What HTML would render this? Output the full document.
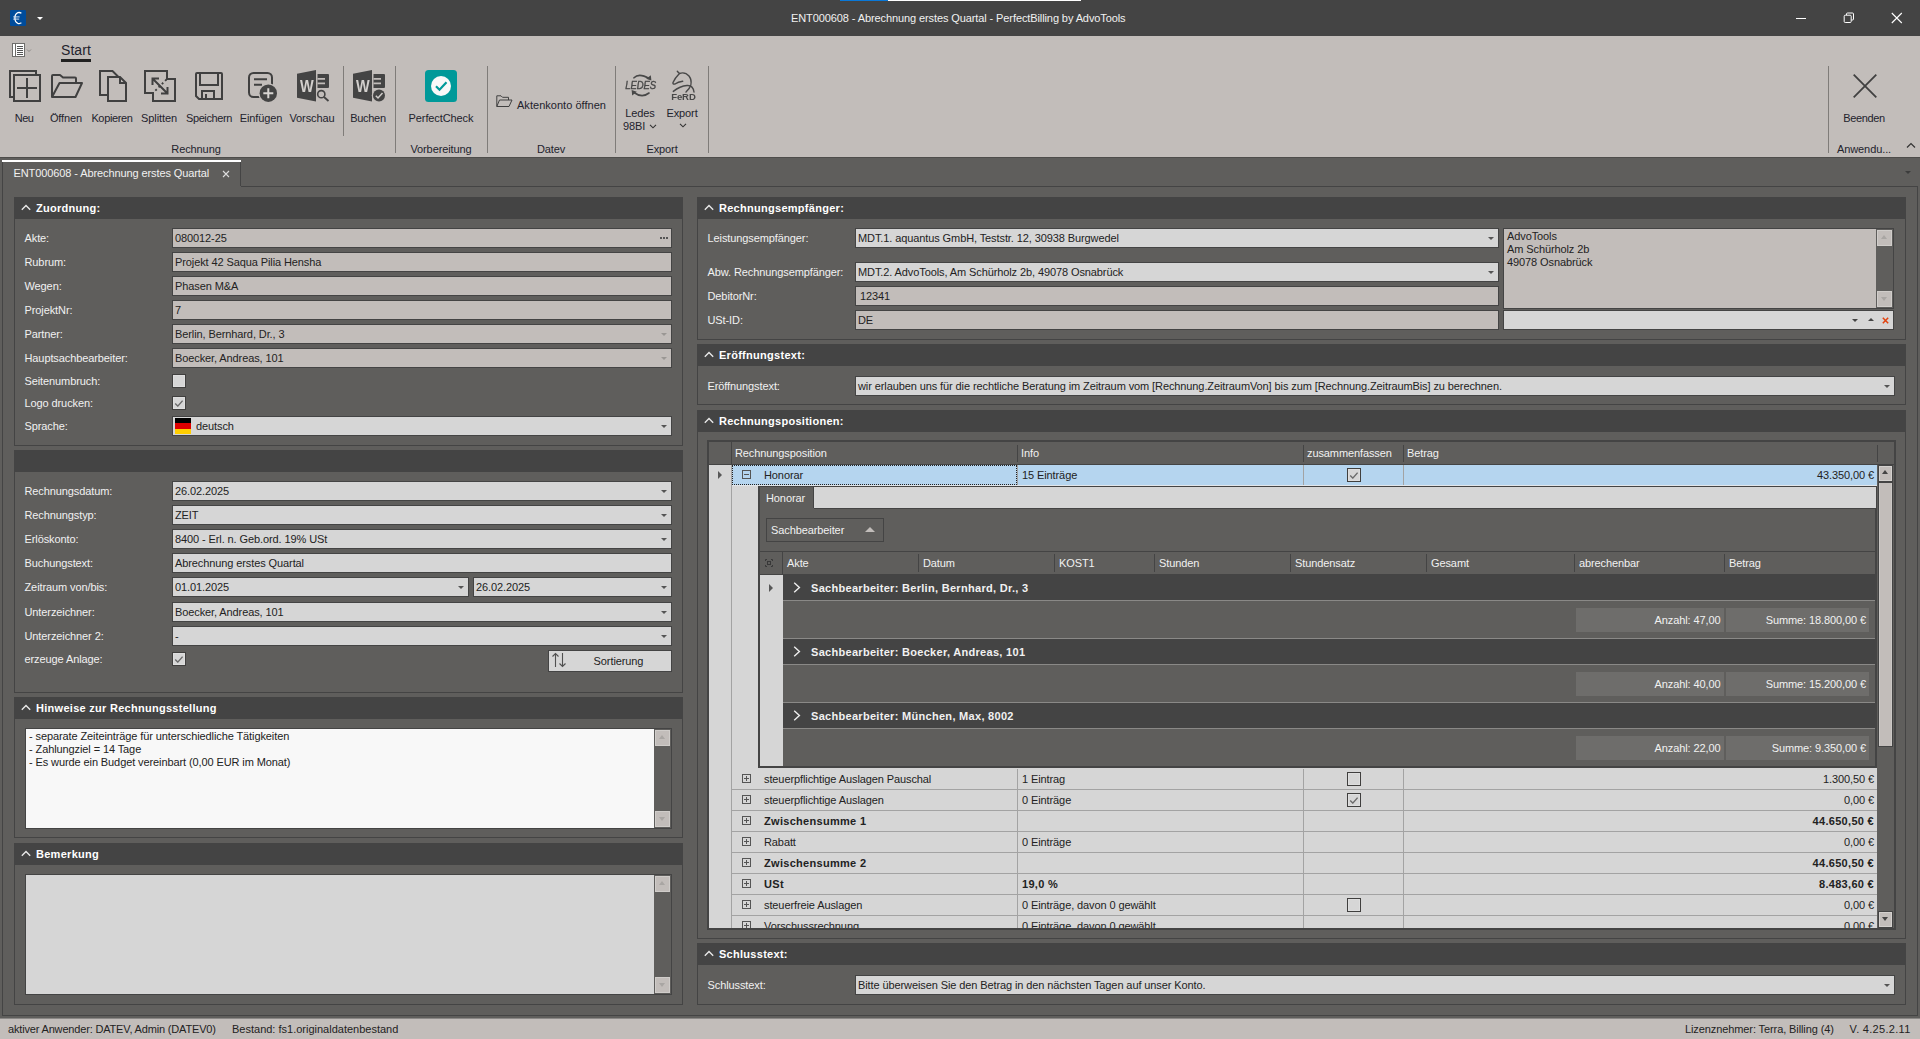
<!DOCTYPE html>
<html lang="de">
<head>
<meta charset="utf-8">
<title>ENT000608 - Abrechnung erstes Quartal - PerfectBilling by AdvoTools</title>
<style>
*{box-sizing:border-box;margin:0;padding:0}
html,body{width:1920px;height:1039px;overflow:hidden}
body{position:relative;background:#5f5e5c;font-family:"Liberation Sans",sans-serif;font-size:11px;color:#222;letter-spacing:-0.1px}
.a{position:absolute}
.t{position:absolute;white-space:nowrap;line-height:14px;height:14px}
.w{color:#f1f1f1}
.b{font-weight:bold;letter-spacing:0.3px}
/* title bar */
#title{left:0;top:0;width:1920px;height:36px;background:#444444}
/* ribbon */
#ribbon{left:0;top:36px;width:1920px;height:122px;background:#c2bdba;border-bottom:1px solid #4e4d4b}
.sep{position:absolute;width:1px;background:#7f7c79}
.rl{position:absolute;white-space:nowrap;line-height:14px;height:14px;text-align:center;color:#23232d}
/* panels */
.pnl{position:absolute;border:1px solid #444;background:#5f5e5c}
.hd{position:absolute;left:-1px;top:-1px;right:-1px;height:22px;background:#444}
.hd .t{left:22px;top:4px;color:#fff;font-weight:bold;letter-spacing:0.28px}
.hd svg{position:absolute;left:7px;top:7px}
.lbl{position:absolute;white-space:nowrap;line-height:20px;height:20px;color:#f1f1f1}
.inp{position:absolute;height:20px;border:1px solid #444;background:#d6d6d6;line-height:18px;padding-left:2px;white-space:nowrap;overflow:hidden;color:#222}
.ro{background:#c2bdba}
.dd:after{content:"";position:absolute;right:4px;top:8px;border:3.5px solid transparent;border-top:3.5px solid #555;border-bottom:0}
.ro.dd:after{border-top-color:#9a9794}
.cb{position:absolute;width:14px;height:14px;border:1px solid #403f3e;background:#d6d6d6;box-shadow:inset 0 0 0 1px #dedede}
.cb svg{position:absolute;left:0;top:0}
.sb{position:absolute;width:17px;background:#5f5e5c}
.sbb{position:absolute;left:1px;width:15px;height:16px;background:#c2bdba;border:1px solid #d0cdca}

.flag{display:inline-block;vertical-align:top;width:16px;height:16px;margin:1px 5px 0 0;background:linear-gradient(#000 0,#000 33%,#dd0000 33%,#dd0000 67%,#ffce00 67%)}
.sbb i{position:absolute;left:3px;border:3.5px solid transparent}
.sbb i.up{border-bottom:4px solid #a9a6a3;border-top:0;top:4px}
.sbb i.dn{border-top:4px solid #a9a6a3;border-bottom:0;top:5px}
/* status */
#status{left:0;top:1018px;width:1920px;height:21px;background:#c2bdba;border-top:1px solid #8a8886}
</style>
</head>
<body>

<!-- ================= TITLE BAR ================= -->
<div id="title" class="a">
  <div class="a" style="left:840px;top:0;width:48px;height:1px;background:#0a78d7"></div>
  <div class="a" style="left:888px;top:0;width:193px;height:1px;background:#fff"></div>
  <svg class="a" style="left:10px;top:10px" width="16" height="16" viewBox="0 0 16 16"><rect width="16" height="16" rx="1.2" fill="#004c9b"/>
    <path d="M11.4,3.3Q9.8,2.1 7.9,2.7Q4.9,3.9 4.9,8Q4.9,12.2 7.9,13.3Q9.8,13.9 11.4,12.8" fill="none" stroke="#fff" stroke-width="1.25"/>
    <path d="M3.2,6.9H9.6M3.2,9.1H9.2" stroke="#e6eef8" stroke-width="0.9"/></svg>
  <div class="a" style="left:37px;top:17px;border:3px solid transparent;border-top:3.5px solid #fff;border-bottom:0"></div>
  <div class="a" style="left:1796px;top:18px;width:10px;height:1px;background:#fff"></div>
  <svg class="a" style="left:1843px;top:12px" width="12" height="12" viewBox="0 0 12 12" fill="none" stroke="#fff" stroke-width="1"><path d="M3.5,3V2Q3.5,1 4.5,1H9.5Q10.5,1 10.5,2V7Q10.5,8 9.5,8H8.5"/><rect x="1.2" y="3.2" width="7" height="7.3" rx="1"/></svg>
  <svg class="a" style="left:1891px;top:12px" width="12" height="12" viewBox="0 0 12 12"><path d="M0.8,1L10.8,11M10.8,1L0.8,11" stroke="#fff" stroke-width="1.1"/></svg>
  <div class="t" style="left:791px;top:11px;color:#f1f1f1" id="ttl">ENT000608 - Abrechnung erstes Quartal - PerfectBilling by AdvoTools</div>
</div>

<!-- ================= RIBBON ================= -->
<div id="ribbon" class="a">
  <!-- quick icon + Start tab (coords relative to ribbon top=36) -->
  <svg class="a" style="left:12px;top:7px" width="22" height="14" viewBox="0 0 22 14">
    <rect x="0.5" y="0.5" width="12" height="13" fill="#fff" stroke="#6e6d6b"/>
    <path d="M3.5,1V13" stroke="#6e6d6b"/>
    <path d="M5,3.5H11M5,5.5H11M5,7.5H11M5,9.5H11M5,11.5H11" stroke="#555" stroke-width="1"/>
    <path d="M15,6.5L17,8.5L19,6.5" fill="none" stroke="#8f8c89" stroke-width="1"/>
  </svg>
  <div class="a" style="left:61px;top:5px;font-size:14px;line-height:18px;color:#23232d;letter-spacing:0.05px" id="start">Start</div>
  <div class="a" style="left:61px;top:23px;width:30px;height:3px;background:#222"></div>

  <!-- Neu -->
  <svg class="a" style="left:9px;top:34px" width="32" height="32" viewBox="0 0 32 32" fill="none" stroke="#404040" stroke-width="2">
    <path d="M5,27H1V1H27V5"/><rect x="5" y="5" width="26" height="26"/><path d="M8,18H28M18,8V28"/>
  </svg>
  <div class="rl" style="left:-1px;width:50px;top:75px;letter-spacing:-0.55px">Neu</div>
  <!-- Öffnen -->
  <svg class="a" style="left:51px;top:34px" width="33" height="32" viewBox="0 0 33 32" fill="none" stroke="#404040" stroke-width="2" stroke-linejoin="round">
    <path d="M1,27V6Q1,5 2,5H9L12,7.5H24Q25,7.5 25,8.5V13"/><path d="M8.5,13H31L24.5,27H1Z"/>
  </svg>
  <div class="rl" style="left:41px;width:50px;top:75px">Öffnen</div>
  <!-- Kopieren -->
  <svg class="a" style="left:99px;top:34px" width="29" height="32" viewBox="0 0 29 32" fill="none" stroke="#404040" stroke-width="2">
    <path d="M9,25H1V1H13.5L19.5,7"/><path d="M9,7H21L27,13V31H9Z"/><path d="M21,7V13H27"/>
  </svg>
  <div class="rl" style="left:87px;width:50px;top:75px;letter-spacing:-0.35px">Kopieren</div>
  <!-- Splitten -->
  <svg class="a" style="left:144px;top:34px" width="32" height="32" viewBox="0 0 32 32" fill="none" stroke="#404040" stroke-width="2">
    <path d="M1,1H23V9H31V31H9V23H1Z"/><path d="M9,9L24,24M8.5,15V8.5H15M23.5,17V23.5H17"/><path d="M22.5,9.5L9.5,22.5" stroke-dasharray="2 2.6" stroke-width="1.8"/>
  </svg>
  <div class="rl" style="left:134px;width:50px;top:75px">Splitten</div>
  <!-- Speichern -->
  <svg class="a" style="left:195px;top:34px" width="28" height="32" viewBox="0 0 28 32" fill="none" stroke="#404040" stroke-width="2">
    <path d="M2,3H26Q27,3 27,4V29H4L1,26V4Q1,3 2,3Z"/><path d="M5,3V15H23V3"/><path d="M7,29V21H19V29M11,24V29"/>
  </svg>
  <div class="rl" style="left:184px;width:50px;top:75px;letter-spacing:-0.38px">Speichern</div>
  <!-- Einfügen -->
  <svg class="a" style="left:248px;top:34px" width="30" height="33" viewBox="0 0 30 33" fill="none" stroke="#404040" stroke-width="2">
    <rect x="1" y="3" width="23" height="24" rx="4.5"/><path d="M6,9.3H19M6,14.7H14"/>
    <circle cx="20.3" cy="23.2" r="10" fill="#c2bdba" stroke="none"/><circle cx="20.3" cy="23.2" r="8.7" fill="#444" stroke="none"/>
    <path d="M15.3,23.2H25.3M20.3,18.2V28.2" stroke="#d8d5d2"/>
  </svg>
  <div class="rl" style="left:236px;width:50px;top:75px">Einfügen</div>
  <!-- Vorschau -->
  <svg class="a" style="left:297px;top:34px;will-change:transform" width="33" height="32" viewBox="0 0 33 32">
    <path d="M0,3.8L19,0V31.5L0,27.7Z" fill="#444"/>
    <text x="2.9" y="21.9" font-family="Liberation Sans" font-weight="bold" font-size="16.8" fill="#d3d0cd" textLength="13.6" lengthAdjust="spacingAndGlyphs">W</text>
    <path d="M20.5,4H31Q32,4 32,5V17Q32,18 31,18H20.5Z" fill="#444"/>
    <path d="M20.5,8.9H28M20.5,13.4H28" stroke="#c2bdba" stroke-width="1.6"/>
    <circle cx="24.3" cy="24.2" r="3.6" fill="none" stroke="#444" stroke-width="1.6"/><path d="M27,27L31.5,31" stroke="#444" stroke-width="1.8"/>
  </svg>
  <div class="rl" style="left:287px;width:50px;top:75px">Vorschau</div>
  <div class="sep" style="left:343px;top:30px;height:70px"></div>
  <!-- Buchen -->
  <svg class="a" style="left:353px;top:34px;will-change:transform" width="33" height="32" viewBox="0 0 33 32">
    <path d="M0,3.8L19,0V31.5L0,27.7Z" fill="#444"/>
    <text x="2.9" y="21.9" font-family="Liberation Sans" font-weight="bold" font-size="16.8" fill="#d3d0cd" textLength="13.6" lengthAdjust="spacingAndGlyphs">W</text>
    <path d="M20.5,4H31Q32,4 32,5V17Q32,18 31,18H20.5Z" fill="#444"/>
    <path d="M20.5,8.9H28M20.5,13.4H28" stroke="#c2bdba" stroke-width="1.6"/>
    <circle cx="26" cy="25.5" r="7.2" fill="#c2bdba"/><circle cx="26" cy="25.5" r="6" fill="#444"/>
    <path d="M22.8,25.8L25,28L29.5,23" fill="none" stroke="#d0cdca" stroke-width="1.5"/>
  </svg>
  <div class="rl" style="left:343px;width:50px;top:75px;letter-spacing:-0.3px">Buchen</div>
  <div class="rl" style="left:146px;width:100px;top:106px">Rechnung</div>
  <div class="sep" style="left:395px;top:30px;height:87px"></div>
  <!-- PerfectCheck -->
  <svg class="a" style="left:425px;top:34px" width="32" height="32" viewBox="0 0 32 32">
    <rect width="32" height="32" rx="3.5" fill="#009999"/><circle cx="16" cy="16" r="10" fill="#f8f8f8"/>
    <path d="M11,16.2L14.5,19.7L21.5,12.3" fill="none" stroke="#009999" stroke-width="2.2"/>
  </svg>
  <div class="rl" style="left:391px;width:100px;top:75px">PerfectCheck</div>
  <div class="rl" style="left:391px;width:100px;top:106px">Vorbereitung</div>
  <div class="sep" style="left:487px;top:30px;height:87px"></div>
  <!-- Aktenkonto öffnen -->
  <svg class="a" style="left:496px;top:59px" width="17" height="13" viewBox="0 0 17 13" fill="none" stroke="#404040" stroke-width="1" stroke-linejoin="round">
    <path d="M0.8,11.5V0.8H5L6.5,2.3H12.5V5"/><path d="M3.5,5H16L13,11.5H0.8Z"/>
  </svg>
  <div class="rl" style="left:517px;top:62px;text-align:left;letter-spacing:0.03px">Aktenkonto öffnen</div>
  <div class="rl" style="left:501px;width:100px;top:106px">Datev</div>
  <div class="sep" style="left:615px;top:30px;height:87px"></div>
  <!-- Ledes -->
  <svg class="a" style="left:623px;top:36px;will-change:transform" width="36" height="28" viewBox="0 0 36 28" fill="none" stroke="#484848" stroke-width="1.6" stroke-linecap="round">
    <path d="M11,5.8Q16,0.5 26,6.5"/><path d="M28.4,8.6L27.8,3.2L23.2,6.8Z" fill="#484848" stroke="none"/>
    <path d="M26,21Q19,26.5 11,20.5"/><path d="M8.6,18L9.2,23.4L13.8,19.8Z" fill="#484848" stroke="none"/>
    <text x="2.2" y="17.3" font-family="Liberation Sans" font-style="italic" font-size="10.6" fill="#484848" stroke="#484848" stroke-width="0.35" textLength="30.8" lengthAdjust="spacingAndGlyphs">LEDES</text>
  </svg>
  <div class="rl" style="left:615px;width:50px;top:70px">Ledes</div>
  <div class="rl" style="left:623px;top:83px;text-align:left">98BI</div>
  <svg class="a" style="left:649px;top:88px" width="8" height="5" viewBox="0 0 8 5"><path d="M1,0.8L4,3.8L7,0.8" fill="none" stroke="#333" stroke-width="1.1"/></svg>
  <!-- FeRD -->
  <svg class="a" style="left:670px;top:34px;will-change:transform" width="27" height="31" viewBox="0 0 27 31" fill="none" stroke="#484848" stroke-width="1.4" stroke-linecap="round">
    <path d="M7.3,1.2Q8.5,2.5 9.4,3.5Q5,8 3,12.5Q2.5,14.5 5,14Q8,12 12.7,11.3"/>
    <path d="M9.4,3.5Q15,1.5 19,6Q22,10 20.8,15Q19.5,19 16,22"/>
    <path d="M3.3,21.4Q10,16 17,15.5Q23,15 24,22"/>
    <text x="1.2" y="29.9" font-family="Liberation Sans" font-weight="bold" font-size="9.4" fill="#484848" stroke="none" textLength="24.5" lengthAdjust="spacingAndGlyphs">FeRD</text>
  </svg>
  <div class="rl" style="left:657px;width:50px;top:70px">Export</div>
  <svg class="a" style="left:679px;top:87px" width="8" height="5" viewBox="0 0 8 5"><path d="M1,0.8L4,3.8L7,0.8" fill="none" stroke="#333" stroke-width="1.1"/></svg>
  <div class="rl" style="left:612px;width:100px;top:106px">Export</div>
  <div class="sep" style="left:708px;top:30px;height:87px"></div>
  <!-- Beenden -->
  <div class="sep" style="left:1828px;top:30px;height:87px"></div>
  <svg class="a" style="left:1853px;top:38px" width="24" height="24" viewBox="0 0 24 24"><path d="M0.7,0.7L23.3,23.3M23.3,0.7L0.7,23.3" stroke="#404040" stroke-width="1.8"/></svg>
  <div class="rl" style="left:1839px;width:50px;top:75px;letter-spacing:-0.35px">Beenden</div>
  <div class="rl" style="left:1837px;top:106px;text-align:left">Anwendu...</div>
  <svg class="a" style="left:1906px;top:106px" width="10" height="7" viewBox="0 0 10 7"><path d="M1,5.5L5,1.5L9,5.5" fill="none" stroke="#333" stroke-width="1.2"/></svg>
</div>

<!-- ================= TAB STRIP ================= -->
<div id="tabs" class="a" style="left:0;top:158px;width:1920px;height:29px">
  <div class="a" style="left:2px;top:2px;width:239px;height:27px;background:#5f5e5c;border-left:1px solid #444;border-right:1px solid #444"></div><div class="a" style="left:2px;top:2px;width:239px;height:2px;background:#fff"></div>
  <div class="t w" style="left:13.5px;top:8px" id="tabtxt">ENT000608 - Abrechnung erstes Quartal</div>
  <svg class="a" style="left:222px;top:12px" width="8" height="8" viewBox="0 0 8 8"><path d="M1,1L7,7M7,1L1,7" stroke="#ddd" stroke-width="1.1"/></svg>
  <div class="a" style="left:1905px;top:13px;border:3.5px solid transparent;border-top:3.5px solid #3c3c3c;border-bottom:0"></div>
</div>

<!-- ================= DOCUMENT AREA ================= -->
<div id="doc" class="a" style="left:2px;top:186px;width:1916px;height:830px;border:1px solid #444">
  <div class="a" style="left:0;top:-1px;width:238px;height:1px;background:#5f5e5c"></div>
</div>

<!-- LEFT-BEGIN -->
<!-- ===== LEFT COLUMN ===== -->
<div class="pnl" style="left:14px;top:197px;width:669px;height:249px"><div class="hd"><svg width="10" height="7" viewBox="0 0 10 7"><path d="M0.8,5.8L5,1.6L9.2,5.8" fill="none" stroke="#e8e8e8" stroke-width="1.4"/></svg><div class="t">Zuordnung:</div></div>
<div class="lbl" style="left:9.5px;top:30px">Akte:</div>
<div class="inp ro" style="left:157px;top:30px;width:500px">080012-25</div>
<div class="lbl" style="left:9.5px;top:54px">Rubrum:</div>
<div class="inp ro" style="left:157px;top:54px;width:500px">Projekt 42 Saqua Pilia Hensha</div>
<div class="lbl" style="left:9.5px;top:78px">Wegen:</div>
<div class="inp ro" style="left:157px;top:78px;width:500px">Phasen M&amp;A</div>
<div class="lbl" style="left:9.5px;top:102px">ProjektNr:</div>
<div class="inp ro" style="left:157px;top:102px;width:500px">7</div>
<div class="lbl" style="left:9.5px;top:126px">Partner:</div>
<div class="inp ro dd" style="left:157px;top:126px;width:500px">Berlin, Bernhard, Dr., 3</div>
<div class="lbl" style="left:9.5px;top:150px">Hauptsachbearbeiter:</div>
<div class="inp ro dd" style="left:157px;top:150px;width:500px">Boecker, Andreas, 101</div>
<div class="a" style="left:645px;top:39px;width:2px;height:2px;background:#555;box-shadow:3px 0 0 #555,6px 0 0 #555"></div>
<div class="lbl" style="left:9.5px;top:173px">Seitenumbruch:</div>
<div class="cb" style="left:157px;top:176px"></div>
<div class="lbl" style="left:9.5px;top:195px">Logo drucken:</div>
<div class="cb" style="left:157px;top:198px"><svg width="10" height="10" viewBox="0 0 10 10"><path d="M2.2,6.6L4.8,9.1L9.6,3.6" fill="none" stroke="#6a6a6a" stroke-width="1.35"/></svg></div>
<div class="lbl" style="left:9.5px;top:218px">Sprache:</div>
<div class="inp dd" style="left:157px;top:218px;width:500px"><span class="flag"></span>deutsch</div>
</div>
<div class="pnl" style="left:14px;top:450px;width:669px;height:243px"><div class="hd"></div>
<div class="lbl" style="left:9.5px;top:30px">Rechnungsdatum:</div>
<div class="inp dd" style="left:157px;top:30px;width:500px">26.02.2025</div>
<div class="lbl" style="left:9.5px;top:54px">Rechnungstyp:</div>
<div class="inp dd" style="left:157px;top:54px;width:500px">ZEIT</div>
<div class="lbl" style="left:9.5px;top:78px">Erlöskonto:</div>
<div class="inp dd" style="left:157px;top:78px;width:500px">8400 - Erl. n. Geb.ord. 19% USt</div>
<div class="lbl" style="left:9.5px;top:102px">Buchungstext:</div>
<div class="inp " style="left:157px;top:102px;width:500px">Abrechnung erstes Quartal</div>
<div class="lbl" style="left:9.5px;top:126px">Zeitraum von/bis:</div>
<div class="inp dd" style="left:157px;top:126px;width:297px">01.01.2025</div>
<div class="inp dd" style="left:458px;top:126px;width:199px">26.02.2025</div>
<div class="lbl" style="left:9.5px;top:151px">Unterzeichner:</div>
<div class="inp dd" style="left:157px;top:151px;width:500px">Boecker, Andreas, 101</div>
<div class="lbl" style="left:9.5px;top:175px">Unterzeichner 2:</div>
<div class="inp dd" style="left:157px;top:175px;width:500px">-</div>
<div class="lbl" style="left:9.5px;top:198px">erzeuge Anlage:</div>
<div class="cb" style="left:157px;top:201px"><svg width="10" height="10" viewBox="0 0 10 10"><path d="M2.2,6.6L4.8,9.1L9.6,3.6" fill="none" stroke="#6a6a6a" stroke-width="1.35"/></svg></div>
<div class="inp" style="left:533px;top:199px;width:124px;height:22px;background:#d6d6d6;text-align:center;line-height:20px;padding-left:17px">Sortierung<svg class="a" style="left:2px;top:1px" width="16" height="16" viewBox="0 0 16 16" fill="none" stroke="#505050" stroke-width="1.1"><path d="M4.5,15V1.5M1.5,4.5L4.5,1.5L7.5,4.5M11.5,1V14.5M8.5,11.5L11.5,14.5L14.5,11.5"/></svg></div>
</div>
<div class="pnl" style="left:14px;top:697px;width:669px;height:141px"><div class="hd"><svg width="10" height="7" viewBox="0 0 10 7"><path d="M0.8,5.8L5,1.6L9.2,5.8" fill="none" stroke="#e8e8e8" stroke-width="1.4"/></svg><div class="t">Hinweise zur Rechnungsstellung</div></div>
<div class="inp" style="left:10px;top:30px;width:647px;height:101px;background:#f8f8f8;line-height:13px;padding:1px 0 0 3px;white-space:pre">- separate Zeiteinträge für unterschiedliche Tätigkeiten
- Zahlungziel = 14 Tage
- Es wurde ein Budget vereinbart (0,00 EUR im Monat)</div>
<div class="sb" style="left:639px;top:31px;height:99px"><div class="sbb" style="top:1px"><i class="up"></i></div><div class="sbb" style="bottom:1px"><i class="dn"></i></div></div>
</div>
<div class="pnl" style="left:14px;top:843px;width:669px;height:162px"><div class="hd"><svg width="10" height="7" viewBox="0 0 10 7"><path d="M0.8,5.8L5,1.6L9.2,5.8" fill="none" stroke="#e8e8e8" stroke-width="1.4"/></svg><div class="t">Bemerkung</div></div>
<div class="inp" style="left:10px;top:30px;width:647px;height:121px;background:#d6d6d6"></div>
<div class="sb" style="left:639px;top:31px;height:119px"><div class="sbb" style="top:1px"><i class="up"></i></div><div class="sbb" style="bottom:1px"><i class="dn"></i></div></div>
</div>
<!-- LEFT-END -->
<!-- RIGHT-BEGIN -->
<!-- ===== RIGHT COLUMN ===== -->
<div class="pnl" style="left:697px;top:197px;width:1209px;height:143px"><div class="hd"><svg width="10" height="7" viewBox="0 0 10 7"><path d="M0.8,5.8L5,1.6L9.2,5.8" fill="none" stroke="#e8e8e8" stroke-width="1.4"/></svg><div class="t">Rechnungsempfänger:</div></div>
<div class="lbl" style="left:9.5px;top:30px">Leistungsempfänger:</div>
<div class="inp dd" style="left:157px;top:30px;width:644px;">MDT.1. aquantus GmbH, Teststr. 12, 30938 Burgwedel</div>
<div class="lbl" style="left:9.5px;top:64px">Abw. Rechnungsempfänger:</div>
<div class="inp dd" style="left:157px;top:64px;width:644px;">MDT.2. AdvoTools, Am Schürholz 2b, 49078 Osnabrück</div>
<div class="lbl" style="left:9.5px;top:88px">DebitorNr:</div>
<div class="inp ro" style="left:157px;top:88px;width:644px;padding-left:4px">12341</div>
<div class="lbl" style="left:9.5px;top:112px">USt-ID:</div>
<div class="inp ro" style="left:157px;top:112px;width:644px;">DE</div>
<div class="inp ro" style="left:805px;top:30px;width:391px;height:81px;line-height:13px;padding:1px 0 0 3px;white-space:pre">AdvoTools
Am Schürholz 2b
49078 Osnabrück</div>
<div class="sb" style="left:1178px;top:31px;height:79px"><div class="sbb" style="top:1px"><i class="up"></i></div><div class="sbb" style="bottom:1px"><i class="dn"></i></div></div>
<div class="inp " style="left:805px;top:112px;width:391px;"><i class="a" style="left:348px;top:8px;border:3px solid transparent;border-top:3px solid #444;border-bottom:0"></i><i class="a" style="left:364px;top:7px;border:3px solid transparent;border-bottom:3px solid #444;border-top:0"></i><svg class="a" style="left:378px;top:6px" width="7" height="7" viewBox="0 0 7 7"><path d="M0.8,0.8L6.2,6.2M6.2,0.8L0.8,6.2" stroke="#e2420f" stroke-width="1.5"/></svg></div>
</div>
<div class="pnl" style="left:697px;top:344px;width:1209px;height:61px"><div class="hd"><svg width="10" height="7" viewBox="0 0 10 7"><path d="M0.8,5.8L5,1.6L9.2,5.8" fill="none" stroke="#e8e8e8" stroke-width="1.4"/></svg><div class="t">Eröffnungstext:</div></div>
<div class="lbl" style="left:9.5px;top:31px">Eröffnungstext:</div>
<div class="inp dd" style="left:157px;top:31px;width:1040px;">wir erlauben uns für die rechtliche Beratung im Zeitraum vom [Rechnung.ZeitraumVon] bis zum [Rechnung.ZeitraumBis] zu berechnen.</div>
</div>
<div class="pnl" style="left:697px;top:410px;width:1209px;height:529px"><div class="hd"><svg width="10" height="7" viewBox="0 0 10 7"><path d="M0.8,5.8L5,1.6L9.2,5.8" fill="none" stroke="#e8e8e8" stroke-width="1.4"/></svg><div class="t">Rechnungspositionen:</div></div>
<div class="a" style="left:9px;top:29px;width:1189px;height:490px;border:2px solid #444;background:#5f5e5c"><div class="a" style="left:0;top:0;width:1185px;height:486px;overflow:hidden">
<div class="lbl " style="left:26px;top:1px;">Rechnungsposition</div>
<div class="lbl " style="left:312px;top:1px;">Info</div>
<div class="lbl " style="left:598px;top:1px;">zusammenfassen</div>
<div class="lbl " style="left:698px;top:1px;">Betrag</div>
<div class="a " style="left:22px;top:0px;width:1px;height:22px;background:#444"></div>
<div class="a " style="left:308px;top:3px;width:1px;height:17px;background:#444"></div>
<div class="a " style="left:594px;top:3px;width:1px;height:17px;background:#444"></div>
<div class="a " style="left:694px;top:3px;width:1px;height:17px;background:#444"></div>
<div class="a " style="left:1168px;top:3px;width:1px;height:17px;background:#444"></div>
<div class="a " style="left:0px;top:22px;width:1185px;height:1px;background:#444"></div>
<div class="a " style="left:0px;top:23px;width:1168px;height:463px;background:#d6d6d6"></div>
<div class="a " style="left:22px;top:23px;width:1px;height:463px;background:#a3a3a3"></div>
<div class="a " style="left:23px;top:23px;width:1145px;height:20px;background:#b5d5ef"></div>
<div class="a " style="left:23px;top:23px;width:285px;height:20px;border:1px dotted #222"></div>
<div class="a " style="left:308px;top:23px;width:1px;height:20px;background:#a3a3a3"></div>
<div class="a " style="left:594px;top:23px;width:1px;height:20px;background:#a3a3a3"></div>
<div class="a " style="left:694px;top:23px;width:1px;height:20px;background:#a3a3a3"></div>
<div class="a " style="left:23px;top:43px;width:1145px;height:1px;background:#e2e6ea"></div>
<i class="a" style="left:9px;top:29px;border:4px solid transparent;border-left:4px solid #585858;border-right:0"></i>
<svg class="a" style="left:33px;top:28px" width="9" height="9" viewBox="0 0 9 9"><rect x="0.5" y="0.5" width="8" height="8" fill="none" stroke="#555"/><path d="M2,4.5H7" stroke="#555"/></svg>
<div class="lbl " style="left:55px;top:23px;color:#222">Honorar</div>
<div class="lbl " style="left:313px;top:23px;color:#222">15 Einträge</div>
<div class="lbl " style="right:20px;top:23px;color:#222">43.350,00 €</div>
<div class="cb" style="left:638px;top:26px"><svg width="10" height="10" viewBox="0 0 10 10"><path d="M2.2,6.6L4.8,9.1L9.6,3.6" fill="none" stroke="#6a6a6a" stroke-width="1.35"/></svg></div>
<svg class="a" style="left:33px;top:332px" width="9" height="9" viewBox="0 0 9 9"><rect x="0.5" y="0.5" width="8" height="8" fill="none" stroke="#555"/><path d="M2,4.5H7M4.5,2V7" stroke="#555"/></svg>
<div class="lbl " style="left:55px;top:327px;color:#222">steuerpflichtige Auslagen Pauschal</div>
<div class="lbl " style="left:313px;top:327px;color:#222">1 Eintrag</div>
<div class="lbl " style="right:20px;top:327px;color:#222">1.300,50 €</div>
<div class="cb" style="left:638px;top:330px"></div>
<div class="a " style="left:23px;top:347px;width:1145px;height:1px;background:#a3a3a3"></div>
<svg class="a" style="left:33px;top:353px" width="9" height="9" viewBox="0 0 9 9"><rect x="0.5" y="0.5" width="8" height="8" fill="none" stroke="#555"/><path d="M2,4.5H7M4.5,2V7" stroke="#555"/></svg>
<div class="lbl " style="left:55px;top:348px;color:#222">steuerpflichtige Auslagen</div>
<div class="lbl " style="left:313px;top:348px;color:#222">0 Einträge</div>
<div class="lbl " style="right:20px;top:348px;color:#222">0,00 €</div>
<div class="cb" style="left:638px;top:351px"><svg width="10" height="10" viewBox="0 0 10 10"><path d="M2.2,6.6L4.8,9.1L9.6,3.6" fill="none" stroke="#6a6a6a" stroke-width="1.35"/></svg></div>
<div class="a " style="left:23px;top:368px;width:1145px;height:1px;background:#a3a3a3"></div>
<svg class="a" style="left:33px;top:374px" width="9" height="9" viewBox="0 0 9 9"><rect x="0.5" y="0.5" width="8" height="8" fill="none" stroke="#555"/><path d="M2,4.5H7M4.5,2V7" stroke="#555"/></svg>
<div class="lbl b" style="left:55px;top:369px;color:#222">Zwischensumme 1</div>
<div class="lbl b" style="right:20px;top:369px;color:#222">44.650,50 €</div>
<div class="a " style="left:23px;top:389px;width:1145px;height:1px;background:#a3a3a3"></div>
<svg class="a" style="left:33px;top:395px" width="9" height="9" viewBox="0 0 9 9"><rect x="0.5" y="0.5" width="8" height="8" fill="none" stroke="#555"/><path d="M2,4.5H7M4.5,2V7" stroke="#555"/></svg>
<div class="lbl " style="left:55px;top:390px;color:#222">Rabatt</div>
<div class="lbl " style="left:313px;top:390px;color:#222">0 Einträge</div>
<div class="lbl " style="right:20px;top:390px;color:#222">0,00 €</div>
<div class="a " style="left:23px;top:410px;width:1145px;height:1px;background:#a3a3a3"></div>
<svg class="a" style="left:33px;top:416px" width="9" height="9" viewBox="0 0 9 9"><rect x="0.5" y="0.5" width="8" height="8" fill="none" stroke="#555"/><path d="M2,4.5H7M4.5,2V7" stroke="#555"/></svg>
<div class="lbl b" style="left:55px;top:411px;color:#222">Zwischensumme 2</div>
<div class="lbl b" style="right:20px;top:411px;color:#222">44.650,50 €</div>
<div class="a " style="left:23px;top:431px;width:1145px;height:1px;background:#a3a3a3"></div>
<svg class="a" style="left:33px;top:437px" width="9" height="9" viewBox="0 0 9 9"><rect x="0.5" y="0.5" width="8" height="8" fill="none" stroke="#555"/><path d="M2,4.5H7M4.5,2V7" stroke="#555"/></svg>
<div class="lbl b" style="left:55px;top:432px;color:#222">USt</div>
<div class="lbl b" style="left:313px;top:432px;color:#222">19,0 %</div>
<div class="lbl b" style="right:20px;top:432px;color:#222">8.483,60 €</div>
<div class="a " style="left:23px;top:452px;width:1145px;height:1px;background:#a3a3a3"></div>
<svg class="a" style="left:33px;top:458px" width="9" height="9" viewBox="0 0 9 9"><rect x="0.5" y="0.5" width="8" height="8" fill="none" stroke="#555"/><path d="M2,4.5H7M4.5,2V7" stroke="#555"/></svg>
<div class="lbl " style="left:55px;top:453px;color:#222">steuerfreie Auslagen</div>
<div class="lbl " style="left:313px;top:453px;color:#222">0 Einträge, davon 0 gewählt</div>
<div class="lbl " style="right:20px;top:453px;color:#222">0,00 €</div>
<div class="cb" style="left:638px;top:456px"></div>
<div class="a " style="left:23px;top:473px;width:1145px;height:1px;background:#a3a3a3"></div>
<svg class="a" style="left:33px;top:479px" width="9" height="9" viewBox="0 0 9 9"><rect x="0.5" y="0.5" width="8" height="8" fill="none" stroke="#555"/><path d="M2,4.5H7M4.5,2V7" stroke="#555"/></svg>
<div class="lbl " style="left:55px;top:474px;color:#222">Vorschussrechnung</div>
<div class="lbl " style="left:313px;top:474px;color:#222">0 Einträge, davon 0 gewählt</div>
<div class="lbl " style="right:20px;top:474px;color:#222">0,00 €</div>
<div class="a " style="left:23px;top:494px;width:1145px;height:1px;background:#a3a3a3"></div>
<div class="a " style="left:308px;top:327px;width:1px;height:159px;background:#a3a3a3"></div>
<div class="a " style="left:594px;top:327px;width:1px;height:159px;background:#a3a3a3"></div>
<div class="a " style="left:694px;top:327px;width:1px;height:159px;background:#a3a3a3"></div>
<div class="a " style="left:49px;top:44px;width:1119px;height:282px;background:#444"></div>
<div class="a " style="left:51px;top:45px;width:1115px;height:279px;background:#5f5e5c"></div>
<div class="a " style="left:51px;top:45px;width:1116px;height:21px;background:#d6d6d6"></div>
<div class="a " style="left:51px;top:66px;width:1115px;height:1px;background:#444"></div>
<div class="a " style="left:51px;top:45px;width:54px;height:22px;background:#5f5e5c"></div>
<div class="a " style="left:104px;top:45px;width:1px;height:21px;background:#444"></div>
<div class="lbl " style="left:57px;top:46px;">Honorar</div>
<div class="a " style="left:57px;top:76px;width:118px;height:24px;border:1px solid #444"></div>
<div class="lbl " style="left:62px;top:78px;">Sachbearbeiter</div>
<i class="a" style="left:156px;top:85px;border:5px solid transparent;border-bottom:5px solid #c2bdba;border-top:0"></i>
<div class="a " style="left:51px;top:109px;width:1115px;height:1px;background:#444"></div>
<div class="a " style="left:51px;top:132px;width:1115px;height:1px;background:#444"></div>
<div class="lbl " style="left:78px;top:111px;">Akte</div>
<div class="lbl " style="left:214px;top:111px;">Datum</div>
<div class="lbl " style="left:350px;top:111px;">KOST1</div>
<div class="lbl " style="left:450px;top:111px;">Stunden</div>
<div class="lbl " style="left:586px;top:111px;">Stundensatz</div>
<div class="lbl " style="left:722px;top:111px;">Gesamt</div>
<div class="lbl " style="left:870px;top:111px;">abrechenbar</div>
<div class="lbl " style="left:1020px;top:111px;">Betrag</div>
<div class="a " style="left:73px;top:110px;width:1px;height:22px;background:#444"></div>
<div class="a " style="left:209px;top:112px;width:1px;height:18px;background:#444"></div>
<div class="a " style="left:345px;top:112px;width:1px;height:18px;background:#444"></div>
<div class="a " style="left:445px;top:112px;width:1px;height:18px;background:#444"></div>
<div class="a " style="left:581px;top:112px;width:1px;height:18px;background:#444"></div>
<div class="a " style="left:717px;top:112px;width:1px;height:18px;background:#444"></div>
<div class="a " style="left:865px;top:112px;width:1px;height:18px;background:#444"></div>
<div class="a " style="left:1015px;top:112px;width:1px;height:18px;background:#444"></div>
<svg class="a" style="left:56px;top:117px" width="8" height="8" viewBox="0 0 8 8" fill="none" stroke="#383838"><path d="M0.5,2V0.5H2M6,0.5H7.5V2M7.5,6V7.5H6M2,7.5H0.5V6"/><rect x="2.5" y="2.5" width="3" height="3"/></svg>
<div class="a " style="left:51px;top:133px;width:23px;height:191px;background:#d6d6d6"></div>
<i class="a" style="left:60px;top:142px;border:4px solid transparent;border-left:4px solid #585858;border-right:0"></i>
<div class="a " style="left:74px;top:133px;width:1092px;height:25px;background:#444"></div>
<div class="a " style="left:74px;top:158px;width:1092px;height:1px;background:#8a8987"></div>
<svg class="a" style="left:84px;top:140px" width="8" height="11" viewBox="0 0 8 11"><path d="M1.2,0.8L6.4,5.5L1.2,10.2" fill="none" stroke="#eee" stroke-width="1.4"/></svg>
<div class="lbl b" style="left:102px;top:136px;">Sachbearbeiter: Berlin, Bernhard, Dr., 3</div>
<div class="a " style="left:867px;top:166px;width:148px;height:24px;background:#6e6d6b"></div>
<div class="a " style="left:1017px;top:166px;width:143px;height:24px;background:#6e6d6b"></div>
<div class="lbl " style="right:173.5px;top:168px;">Anzahl: 47,00</div>
<div class="lbl " style="right:28px;top:168px;">Summe: 18.800,00 €</div>
<div class="a " style="left:74px;top:196px;width:1092px;height:1px;background:#8a8987"></div>
<div class="a " style="left:74px;top:197px;width:1092px;height:25px;background:#444"></div>
<div class="a " style="left:74px;top:222px;width:1092px;height:1px;background:#8a8987"></div>
<svg class="a" style="left:84px;top:204px" width="8" height="11" viewBox="0 0 8 11"><path d="M1.2,0.8L6.4,5.5L1.2,10.2" fill="none" stroke="#eee" stroke-width="1.4"/></svg>
<div class="lbl b" style="left:102px;top:200px;">Sachbearbeiter: Boecker, Andreas, 101</div>
<div class="a " style="left:867px;top:230px;width:148px;height:24px;background:#6e6d6b"></div>
<div class="a " style="left:1017px;top:230px;width:143px;height:24px;background:#6e6d6b"></div>
<div class="lbl " style="right:173.5px;top:232px;">Anzahl: 40,00</div>
<div class="lbl " style="right:28px;top:232px;">Summe: 15.200,00 €</div>
<div class="a " style="left:74px;top:260px;width:1092px;height:1px;background:#8a8987"></div>
<div class="a " style="left:74px;top:261px;width:1092px;height:25px;background:#444"></div>
<div class="a " style="left:74px;top:286px;width:1092px;height:1px;background:#8a8987"></div>
<svg class="a" style="left:84px;top:268px" width="8" height="11" viewBox="0 0 8 11"><path d="M1.2,0.8L6.4,5.5L1.2,10.2" fill="none" stroke="#eee" stroke-width="1.4"/></svg>
<div class="lbl b" style="left:102px;top:264px;">Sachbearbeiter: München, Max, 8002</div>
<div class="a " style="left:867px;top:294px;width:148px;height:24px;background:#6e6d6b"></div>
<div class="a " style="left:1017px;top:294px;width:143px;height:24px;background:#6e6d6b"></div>
<div class="lbl " style="right:173.5px;top:296px;">Anzahl: 22,00</div>
<div class="lbl " style="right:28px;top:296px;">Summe: 9.350,00 €</div>
<div class="a" style="left:1168px;top:23px;width:17px;height:463px;background:#5f5e5c"></div>
<div class="a" style="left:1169px;top:23px;width:15px;height:17px;background:#c2bdba;border:1px solid #444;box-shadow:inset 0 0 0 1px #d4d1ce"><i class="a" style="left:3px;top:4px;border:3.5px solid transparent;border-bottom:4px solid #444;border-top:0"></i></div>
<div class="a" style="left:1169px;top:469px;width:15px;height:17px;background:#c2bdba;border:1px solid #444;box-shadow:inset 0 0 0 1px #d4d1ce"><i class="a" style="left:3px;top:5px;border:3.5px solid transparent;border-top:4px solid #444;border-bottom:0"></i></div>
<div class="a" style="left:1169px;top:40px;width:15px;height:265px;background:#c2bdba;border:1px solid #444;box-shadow:inset 1px 0 0 #cbc8c5,inset -1px 0 0 #cbc8c5"></div>
</div></div>
</div>
<div class="pnl" style="left:697px;top:943px;width:1209px;height:62px"><div class="hd"><svg width="10" height="7" viewBox="0 0 10 7"><path d="M0.8,5.8L5,1.6L9.2,5.8" fill="none" stroke="#e8e8e8" stroke-width="1.4"/></svg><div class="t">Schlusstext:</div></div>
<div class="lbl" style="left:9.5px;top:31px">Schlusstext:</div>
<div class="inp dd" style="left:157px;top:31px;width:1040px;">Bitte überweisen Sie den Betrag in den nächsten Tagen auf unser Konto.</div>
</div>
<!-- RIGHT-END -->
<!-- ================= STATUS BAR ================= -->
<div id="status" class="a">
  <div class="t" style="left:8px;top:3px;letter-spacing:-0.17px">aktiver Anwender: DATEV, Admin (DATEV0)</div>
  <div class="t" style="left:232px;top:3px;letter-spacing:0">Bestand: fs1.originaldatenbestand</div>
  <div class="t" style="left:1685px;top:3px">Lizenznehmer: Terra, Billing (4)</div>
  <div class="t" style="left:1849.5px;top:3px;letter-spacing:0.3px">V. 4.25.2.11</div>
</div>

</body>
</html>
